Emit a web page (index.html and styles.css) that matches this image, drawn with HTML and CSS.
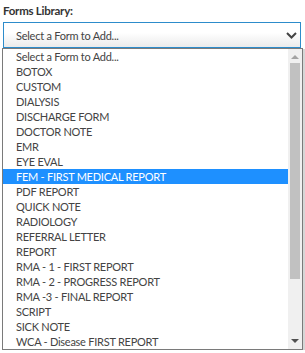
FILE: index.html
```html
<!DOCTYPE html>
<html lang="en">
  <head>
    <meta charset="UTF-8" />
    <title>Forms Library</title>
    <link rel="stylesheet" href="styles.css">
  </head>
  <body>
    <div class="field">
      <p class="field-label">Forms Library:</p>
      <div class="select-box">
        <span>Select a Form to Add...</span>
        <svg class="chevron" width="11" height="7" viewBox="0 0 11 7">
          <path d="M1 1 L5.5 5.5 L10 1" fill="none" stroke="#444" stroke-width="2" />
        </svg>
      </div>
    </div>

    <div class="dropdown">
      <ul class="options">
        <li>Select a Form to Add...</li>
        <li>BOTOX</li>
        <li>CUSTOM</li>
        <li>DIALYSIS</li>
        <li>DISCHARGE FORM</li>
        <li>DOCTOR NOTE</li>
        <li>EMR</li>
        <li>EYE EVAL</li>
        <li class="selected">FEM - FIRST MEDICAL REPORT</li>
        <li>PDF REPORT</li>
        <li>QUICK NOTE</li>
        <li>RADIOLOGY</li>
        <li>REFERRAL LETTER</li>
        <li>REPORT</li>
        <li>RMA - 1 - FIRST REPORT</li>
        <li>RMA - 2 - PROGRESS REPORT</li>
        <li>RMA -3 - FINAL REPORT</li>
        <li>SCRIPT</li>
        <li>SICK NOTE</li>
        <li>WCA - Disease FIRST REPORT</li>
      </ul>
      <div class="scrollbar">
        <span class="arrow up"></span>
        <div class="track"><div class="thumb"></div></div>
        <span class="arrow down"></span>
      </div>
    </div>
  </body>
</html>
```

FILE: styles.css
```css
body {
  margin: 0;
  background-color: #fff;
  font-family: Lato, "Open Sans", sans-serif;
  letter-spacing: -0.25px;
  color: #333;
}

.field {
  padding: 0 4px 0 3px;
}

.field-label {
  margin: 0;
  height: 22px;
  line-height: 22px;
  font-size: 11.5px;
  font-weight: bold;
  color: #333;
}

.select-box {
  height: 24px;
  border: 1px solid #2d8ccb;
  background: linear-gradient(#fff 0%, #fff 40%, #ebebeb 100%);
  display: flex;
  align-items: center;
  justify-content: space-between;
  padding: 0 3px 0 12px;
  font-size: 11px;
  color: #444;
}

.chevron {
  margin-top: 1px;
}

.dropdown {
  margin: 0 2px 0 2px;
  border: 1px solid #7a7a7a;
  display: flex;
  background-color: #fff;
  box-shadow: 1px 2px 0 1px #d6d6d6;
}

.options {
  list-style: none;
  margin: 0;
  padding: 0;
  flex: 1;
}

.options li {
  height: 15px;
  line-height: 15px;
  padding-left: 13px;
  font-size: 11px;
  color: #444;
  white-space: nowrap;
}

.options li.selected {
  background-color: #1e90ff;
  color: #fff;
}

.scrollbar {
  width: 14px;
  background-color: #f0f0f0;
  display: flex;
  flex-direction: column;
  align-items: center;
}

.arrow {
  width: 0;
  height: 0;
  border-left: 4px solid transparent;
  border-right: 4px solid transparent;
}

.arrow.up {
  margin: 6px 0 4px;
  border-bottom: 4px solid #a3a3a3;
}

.arrow.down {
  margin: 4px 0 6px;
  border-top: 4px solid #505050;
}

.track {
  flex: 1;
  width: 100%;
  padding: 0 2px;
  box-sizing: border-box;
}

.thumb {
  height: 216px;
  background-color: #c1c1c1;
}
```
